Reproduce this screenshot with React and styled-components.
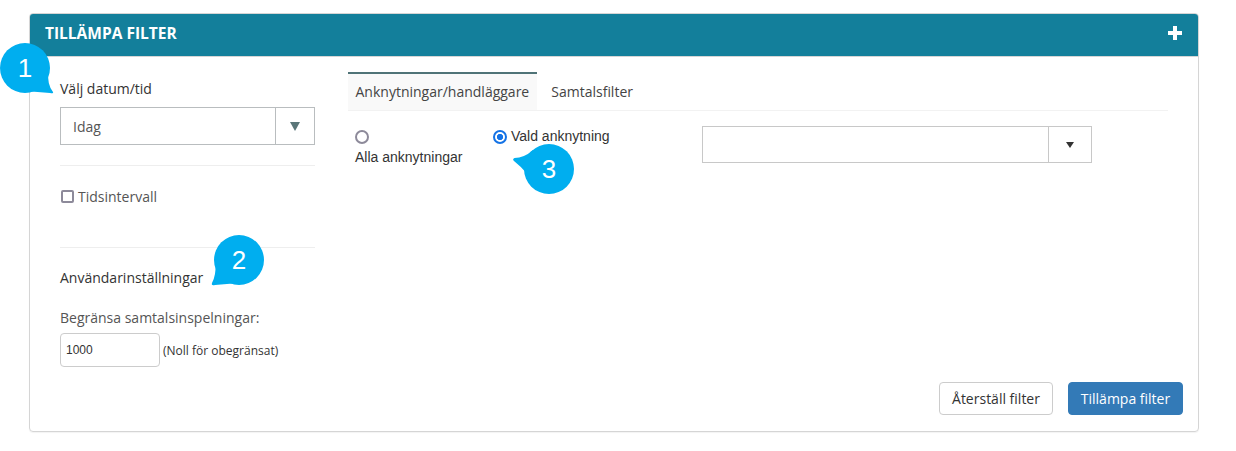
import React from 'react';
import styled, { createGlobalStyle } from 'styled-components';

const GlobalStyle = createGlobalStyle`
    html, body {
        margin: 0;
        padding: 0;
        background: #fff;
    }
    body {
        font-family: "Open Sans", "Liberation Sans", sans-serif;
        color: #333;
    }
`;

const Page = styled.div`
    position: relative;
    width: 1236px;
    height: 451px;
    padding: 13px 0 0 29px;
    box-sizing: border-box;
    overflow: hidden;
`;

const Panel = styled.section`
    width: 1170px;
    height: 419px;
    box-sizing: border-box;
    border: 1px solid #d5d5d5;
    border-radius: 4px;
    display: flex;
    flex-direction: column;
    box-shadow: 0 1px 1px rgba(0, 0, 0, 0.05);
`;

const Header = styled.header`
    height: 43px;
    flex: none;
    box-sizing: border-box;
    background: #137f9b;
    border-radius: 3px 3px 0 0;
    border-bottom: 1px solid #d5d5d5;
    display: flex;
    align-items: center;
    justify-content: space-between;
    padding: 0 15px 5px;
    color: #fff;
    font-size: 15.5px;
    font-weight: 700;
`;

const Body = styled.div`
    flex: 1;
    display: flex;
    padding: 0 30px 16px 30px;
    gap: 33px;
    min-height: 0;
`;

const Sidebar = styled.div`
    width: 255px;
    flex: none;
    padding-top: 23px;
`;

const Label = styled.div`
    font-size: 14px;
    line-height: 18px;
    color: ${(p) => p.$color || '#333'};
    margin-bottom: ${(p) => p.$mb || 0}px;
`;

const DateSelect = styled.div`
    height: 38px;
    box-sizing: border-box;
    border: 1px solid #b9bdbf;
    display: flex;
    align-items: center;
    font-size: 14px;
    color: #555;
`;

const SelectValue = styled.span`
    flex: 1;
    padding-left: 12px;
`;

const SelectArrow = styled.span`
    width: 38px;
    height: 100%;
    border-left: 1px solid #b9bdbf;
    display: flex;
    align-items: center;
    justify-content: center;

    &::after {
        content: '';
        border-left: 5px solid transparent;
        border-right: 5px solid transparent;
        border-top: 9px solid ${(p) => p.$color};
    }
`;

const SmallArrow = styled.span`
    width: 42px;
    height: 100%;
    border-left: 1px solid #c8c8c8;
    display: flex;
    align-items: center;
    justify-content: center;

    &::after {
        content: '';
        border-left: 4px solid transparent;
        border-right: 4px solid transparent;
        border-top: 6px solid #333;
    }
`;

const Divider = styled.hr`
    border: 0;
    border-top: 1px solid #eee;
    margin: ${(p) => p.$top}px 0 ${(p) => p.$bottom}px;
`;

const CheckRow = styled.label`
    display: flex;
    align-items: center;
    gap: 4px;
    height: 18px;
    padding-left: 1px;
    font-size: 14px;
    color: #555;
`;

const CheckBox = styled.span`
    width: 9px;
    height: 9px;
    flex: none;
    border: 2px solid #8d8a9a;
    border-radius: 2px;
    background: #fff;
`;

const LimitRow = styled.div`
    display: flex;
    align-items: center;
    gap: 3px;
    margin-top: 6px;
`;

const LimitInput = styled.div`
    width: 100px;
    height: 34px;
    box-sizing: border-box;
    border: 1px solid #ccc;
    border-radius: 4px;
    padding-left: 5px;
    display: flex;
    align-items: center;
    font-family: "Liberation Sans", Arial, sans-serif;
    font-size: 12px;
    color: #333;
`;

const Hint = styled.span`
    font-size: 12px;
    color: #333;
`;

const Main = styled.div`
    flex: 1;
    display: flex;
    flex-direction: column;
    padding-top: 15px;
    min-width: 0;
`;

const Tabs = styled.div`
    display: flex;
    height: 39px;
    flex: none;
    box-sizing: border-box;
    border-bottom: 1px solid #f2f2f2;
`;

const Tab = styled.div`
    box-sizing: border-box;
    height: 38px;
    padding: 0 ${(p) => (p.$active ? 7.5 : 14.5)}px 2px;
    display: flex;
    align-items: center;
    font-size: 14px;
    color: #444;
    background: ${(p) => (p.$active ? '#f9f9f9' : 'transparent')};
    border-top: 2px solid ${(p) => (p.$active ? '#4f7377' : 'transparent')};
`;

const FilterRow = styled.div`
    display: flex;
    align-items: flex-start;
    padding-top: 15px;
    font-family: "Liberation Sans", Arial, sans-serif;
    font-size: 14px;
    color: #333;
`;

const AllChoice = styled.label`
    width: 138px;
    padding-left: 7px;
    padding-top: 3px;
    flex: none;
    line-height: 16px;
`;

const ChosenChoice = styled.label`
    width: 209px;
    flex: none;
    padding-top: 3px;
    display: flex;
    align-items: flex-start;
    gap: 4px;
    line-height: 14px;
`;

const Radio = styled.span`
    display: block;
    width: 14px;
    height: 14px;
    flex: none;
    box-sizing: border-box;
    border-radius: 50%;
    border: 2px solid ${(p) => (p.$checked ? '#1473e6' : '#8d8a9a')};
    background: ${(p) => (p.$checked ? 'radial-gradient(circle, #1473e6 0 2.8px, #fff 3.5px)' : '#fff')};
    margin-top: 1px;
    margin-bottom: ${(p) => p.$mb || 0}px;
`;

const ExtensionSelect = styled.div`
    width: 390px;
    height: 37px;
    box-sizing: border-box;
    border: 1px solid #c8c8c8;
    display: flex;
    justify-content: flex-end;
`;

const Footer = styled.div`
    margin-top: auto;
    margin-right: -15px;
    display: flex;
    justify-content: flex-end;
    gap: 15px;
`;

const Button = styled.button`
    height: 33px;
    width: ${(p) => p.$width}px;
    box-sizing: border-box;
    border-radius: 4px;
    border: 1px solid ${(p) => (p.$primary ? '#337ab7' : '#ccc')};
    background: ${(p) => (p.$primary ? '#337ab7' : '#fff')};
    color: ${(p) => (p.$primary ? '#fff' : '#333')};
    font-family: inherit;
    font-size: 14px;
    padding: 0;
`;

const Bubble = styled.div`
    position: absolute;
    left: ${(p) => p.$x}px;
    top: ${(p) => p.$y}px;
    width: 62px;
    height: 55px;
`;

const BubbleShape = styled.svg`
    display: block;
    width: 62px;
    height: 55px;
`;

const BubbleNumber = styled.span`
    position: absolute;
    left: ${(p) => p.$cx - 15}px;
    top: ${(p) => p.$cy - 15}px;
    width: 30px;
    height: 30px;
    display: flex;
    align-items: center;
    justify-content: center;
    color: #fff;
    font-family: "Liberation Sans", Arial, sans-serif;
    font-size: 26px;
`;

const PlusIcon = () => (
    <svg width="16" height="16" viewBox="0 0 16 16" fill="#fff">
        <path d="M6 1h4v5h5v4h-5v5H6v-5H1V6h5z" />
    </svg>
);

// each bubble is a circle of radius 25 with its tail going a different way
const bubbleTails = {
    1: { cx: 25, cy: 25, d: 'M25 48 L50 50 Q54 51 53 49 Q47 42 48 25 Z' },
    2: { cx: 32, cy: 26, d: 'M9 26 Q9 42 5 49 Q4 52 8 51 L32 49 Z' },
    3: { cx: 36, cy: 26, d: 'M20 7 Q11 15 1.5 15 Q-1 16 1 18 Q15 29 25 47 L36 26 Z' },
};

const NumberBubble = ({ n, x, y }) => {
    const tail = bubbleTails[n];
    return (
        <Bubble $x={x} $y={y}>
            <BubbleShape viewBox="0 0 62 55">
                <circle cx={tail.cx} cy={tail.cy} r="25" fill="#00aeef" />
                <path d={tail.d} fill="#00aeef" />
            </BubbleShape>
            <BubbleNumber $cx={tail.cx} $cy={tail.cy}>{n}</BubbleNumber>
        </Bubble>
    );
};

export default function App() {
    return (
        <Page>
            <GlobalStyle />
            <Panel>
                <Header>
                    TILLÄMPA FILTER
                    <PlusIcon />
                </Header>
                <Body>
                    <Sidebar>
                        <Label $mb={9}>Välj datum/tid</Label>
                        <DateSelect>
                            <SelectValue>Idag</SelectValue>
                            <SelectArrow $color="#5a7679" />
                        </DateSelect>
                        <Divider $top={20} $bottom={21} />
                        <CheckRow>
                            <CheckBox />
                            Tidsintervall
                        </CheckRow>
                        <Divider $top={42} $bottom={21} />
                        <Label $mb={22}>Användarinställningar</Label>
                        <Label $color="#555">Begränsa samtalsinspelningar:</Label>
                        <LimitRow>
                            <LimitInput>1000</LimitInput>
                            <Hint>(Noll för obegränsat)</Hint>
                        </LimitRow>
                    </Sidebar>
                    <Main>
                        <Tabs>
                            <Tab $active>Anknytningar/handläggare</Tab>
                            <Tab>Samtalsfilter</Tab>
                        </Tabs>
                        <FilterRow>
                            <AllChoice>
                                <Radio $mb={5} />
                                Alla anknytningar
                            </AllChoice>
                            <ChosenChoice>
                                <Radio $checked />
                                Vald anknytning
                            </ChosenChoice>
                            <ExtensionSelect>
                                <SmallArrow />
                            </ExtensionSelect>
                        </FilterRow>
                        <Footer>
                            <Button $width={114}>Återställ filter</Button>
                            <Button $primary $width={115}>Tillämpa filter</Button>
                        </Footer>
                    </Main>
                </Body>
            </Panel>
            <NumberBubble n={1} x={0} y={43} />
            <NumberBubble n={2} x={207} y={234} />
            <NumberBubble n={3} x={513} y={143} />
        </Page>
    );
}
